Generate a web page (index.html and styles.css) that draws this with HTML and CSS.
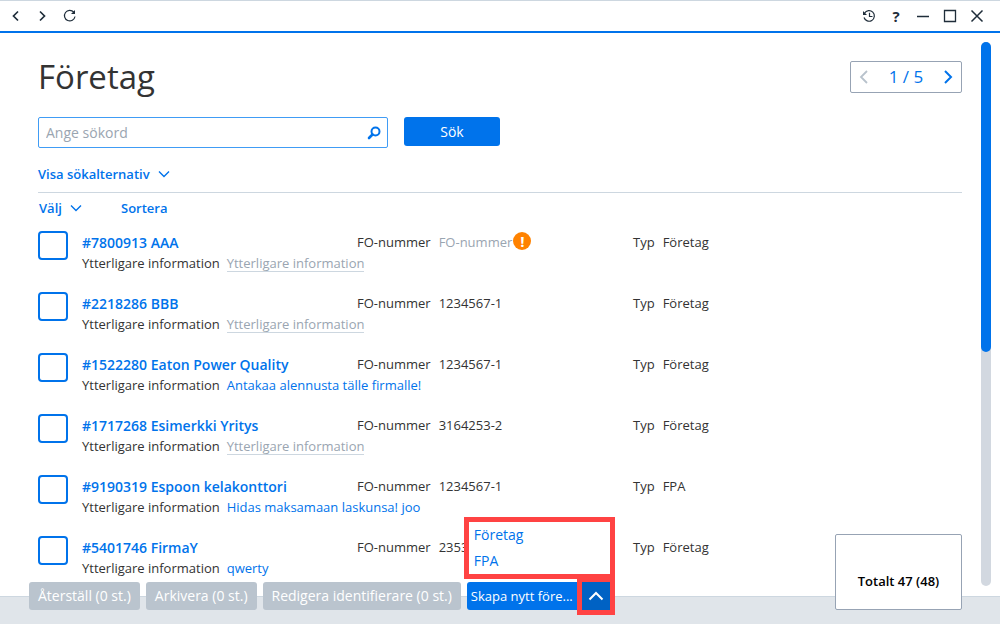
FILE: index.html
```html
<!DOCTYPE html>
<html lang="sv">
<head>
    <meta charset="UTF-8">
    <meta name="viewport" content="width=device-width, initial-scale=1.0">
    <title>Företag</title>
    <link rel="stylesheet" href="styles.css">
</head>
<body>

    <div class="window">
        <header class="titlebar">
            <div class="titlebar-group">
                <button class="icon-button" aria-label="Bakåt">
                    <svg width="14" height="14" viewBox="0 0 14 14"><path d="M9 2.5 4.5 7 9 11.500" stroke-width="1.700"/></svg>
                </button>
                <button class="icon-button" aria-label="Framåt">
                    <svg width="14" height="14" viewBox="0 0 14 14"><path d="M4 2.5 8.500 7 4 11.500" stroke-width="1.700"/></svg>
                </button>
                <button class="icon-button" aria-label="Uppdatera">
                    <svg width="14" height="14" viewBox="0 0 14 14"><path d="M10.800 3.200A5.300 5.300 0 1 0 12 7.500" stroke-width="1.200"/><path d="M12 1v4h-4z" fill="#1f2d3a" stroke="none"/></svg>
                </button>
            </div>
            <div class="titlebar-group">
                <button class="icon-button" aria-label="Historik">
                    <svg width="14" height="14" viewBox="0 0 14 14"><path d="M2.500 4.200A5.300 5.300 0 1 1 2 8.500M7.500 3.800V7.500H10.500" stroke-width="1.200"/><path d="M1 2v4h4z" fill="#1f2d3a" stroke="none"/></svg>
                </button>
                <button class="icon-button help" aria-label="Hjälp">?</button>
                <button class="icon-button" aria-label="Minimera">
                    <svg width="14" height="14" viewBox="0 0 14 14"><path d="M1 7.500h12" stroke-width="1.500"/></svg>
                </button>
                <button class="icon-button" aria-label="Maximera">
                    <svg width="14" height="14" viewBox="0 0 14 14"><path d="M1.500 1.500h11v11h-11z" stroke-width="1.300"/></svg>
                </button>
                <button class="icon-button" aria-label="Stäng">
                    <svg width="14" height="14" viewBox="0 0 14 14"><path d="M1.500 1.500l11 11M12.500 1.500l-11 11" stroke-width="1.500"/></svg>
                </button>
            </div>
        </header>

        <div class="content">
            <main class="page">
                <div class="page-head">
                    <h1>Företag</h1>
                    <div class="pager">
                        <button class="pager-button" aria-label="Föregående sida" disabled>
                            <svg width="12" height="16" viewBox="0 0 12 16"><path d="M9 2 3 8l6 6" stroke-width="1.800"/></svg>
                        </button>
                        <span>1 / 5</span>
                        <button class="pager-button" aria-label="Nästa sida">
                            <svg width="12" height="16" viewBox="0 0 12 16"><path d="M3 2l6 6-6 6" stroke-width="2"/></svg>
                        </button>
                    </div>
                </div>

                <form class="search">
                    <label class="search-field">
                        <input type="text" placeholder="Ange sökord" aria-label="Ange sökord">
                        <svg width="14" height="14" viewBox="0 0 14 14"><circle cx="8.500" cy="5.500" r="4" stroke-width="2"/><path d="M5.500 8.500 2 12" stroke-width="2.600" stroke-linecap="round"/></svg>
                    </label>
                    <button class="search-button" type="button">Sök</button>
                </form>

                <button class="text-button options">Visa sökalternativ
                    <svg width="12" height="8" viewBox="0 0 12 8"><path d="M1 1.500l5 5 5-5" stroke-width="1.400"/></svg>
                </button>

                <div class="list-tools">
                    <button class="text-button select-all">Välj
                        <svg width="12" height="8" viewBox="0 0 12 8"><path d="M1 1.500l5 5 5-5" stroke-width="1.400"/></svg>
                    </button>
                    <button class="text-button">Sortera</button>
                </div>

                <ul class="company-list">
                    <li class="company">
                        <input type="checkbox" id="c1" aria-label="Välj #7800913 AAA">
                        <a class="name" href="#">#7800913 AAA</a>
                        <p class="field"><span>FO-nummer</span><span class="missing">FO-nummer<i class="warning">!</i></span></p>
                        <p class="field"><span>Typ</span><span>Företag</span></p>
                        <p class="info"><span>Ytterligare information</span><a class="empty" href="#">Ytterligare information</a></p>
                    </li>
                    <li class="company">
                        <input type="checkbox" id="c2" aria-label="Välj #2218286 BBB">
                        <a class="name" href="#">#2218286 BBB</a>
                        <p class="field"><span>FO-nummer</span><span>1234567-1</span></p>
                        <p class="field"><span>Typ</span><span>Företag</span></p>
                        <p class="info"><span>Ytterligare information</span><a class="empty" href="#">Ytterligare information</a></p>
                    </li>
                    <li class="company">
                        <input type="checkbox" id="c3" aria-label="Välj #1522280 Eaton Power Quality">
                        <a class="name" href="#">#1522280 Eaton Power Quality</a>
                        <p class="field"><span>FO-nummer</span><span>1234567-1</span></p>
                        <p class="field"><span>Typ</span><span>Företag</span></p>
                        <p class="info"><span>Ytterligare information</span><a href="#">Antakaa alennusta tälle firmalle!</a></p>
                    </li>
                    <li class="company">
                        <input type="checkbox" id="c4" aria-label="Välj #1717268 Esimerkki Yritys">
                        <a class="name" href="#">#1717268 Esimerkki Yritys</a>
                        <p class="field"><span>FO-nummer</span><span>3164253-2</span></p>
                        <p class="field"><span>Typ</span><span>Företag</span></p>
                        <p class="info"><span>Ytterligare information</span><a class="empty" href="#">Ytterligare information</a></p>
                    </li>
                    <li class="company">
                        <input type="checkbox" id="c5" aria-label="Välj #9190319 Espoon kelakonttori">
                        <a class="name" href="#">#9190319 Espoon kelakonttori</a>
                        <p class="field"><span>FO-nummer</span><span>1234567-1</span></p>
                        <p class="field"><span>Typ</span><span>FPA</span></p>
                        <p class="info"><span>Ytterligare information</span><a href="#">Hidas maksamaan laskunsa! joo</a></p>
                    </li>
                    <li class="company">
                        <input type="checkbox" id="c6" aria-label="Välj #5401746 FirmaY">
                        <a class="name" href="#">#5401746 FirmaY</a>
                        <p class="field"><span>FO-nummer</span><span>2353</span></p>
                        <p class="field"><span>Typ</span><span>Företag</span></p>
                        <p class="info"><span>Ytterligare information</span><a href="#">qwerty</a></p>
                    </li>
                </ul>
            </main>

            <div class="scrollbar"><div class="thumb"></div></div>
        </div>

        <footer class="footer">
            <div class="actions">
                <button class="action" disabled>Återställ (0 st.)</button>
                <button class="action" disabled>Arkivera (0 st.)</button>
                <button class="action" disabled>Redigera identifierare (0 st.)</button>
                <div class="create">
                    <button class="action primary">Skapa nytt före...</button>
                    <button class="toggle" aria-label="Visa fler">
                        <svg width="16" height="10" viewBox="0 0 16 10"><path d="M1.500 8.500 8 2l6.500 6.500" stroke-width="2"/></svg>
                    </button>
                    <div class="menu">
                        <a href="#">Företag</a>
                        <a href="#">FPA</a>
                    </div>
                </div>
            </div>
            <div class="total">Totalt 47 (48)</div>
        </footer>
    </div>

</body>
</html>
```
FILE: styles.css
```css
* {
    box-sizing: border-box;
}

body {
    margin: 0;
    font-family: "Open Sans", "Noto Sans", sans-serif;
    font-size: 13px;
    line-height: 20px;
    color: #333;
    background-color: #fff;
}

h1, p, ul {
    margin: 0;
    padding: 0;
}

button, input {
    font: inherit;
}

button {
    padding: 0;
    border: none;
    background: none;
    cursor: pointer;
}

a {
    color: #0073eb;
    text-decoration: none;
}

svg {
    display: block;
    fill: none;
    stroke: currentColor;
}

.window {
    display: flex;
    flex-direction: column;
    height: 100vh;
    overflow: hidden;
}

/* title bar */
.titlebar {
    display: flex;
    flex: none;
    justify-content: space-between;
    height: 33px;
    padding: 0 16px 0 9px;
    border-top: 1px solid #cdd7e0;
    border-bottom: 2px solid #0073eb;
}

.titlebar-group {
    display: flex;
    align-items: center;
    gap: 13px;
}

.icon-button {
    width: 14px;
    color: #1f2d3a;
}

.help {
    font-size: 15px;
    font-weight: 700;
}

/* page */
.content {
    display: flex;
    flex: 1;
    min-height: 0;
}

.page {
    flex: 1;
    padding: 21px 19px 0 38px;
    overflow: hidden;
}

.page-head {
    display: flex;
    justify-content: space-between;
    align-items: center;
    height: 46px;
}

h1 {
    font-size: 33px;
    font-weight: 400;
    line-height: 46px;
}

.pager {
    display: flex;
    justify-content: space-between;
    align-items: center;
    width: 112px;
    height: 32px;
    padding: 0 7px;
    border: 1px solid #97a3b4;
    border-radius: 2px;
    font-size: 17px;
    color: #0073eb;
}

.pager-button {
    color: #0073eb;
}

.pager-button:disabled {
    color: #b8c2cc;
}

.search {
    display: flex;
    gap: 16px;
    margin-top: 17px;
}

.search-field {
    display: flex;
    align-items: center;
    width: 350px;
    height: 31px;
    padding: 0 6px 0 7px;
    border: 1px solid #409cf5;
    border-radius: 2px;
    color: #0073eb;
}

.search-field input {
    flex: 1;
    min-width: 0;
    padding: 0;
    border: none;
    outline: none;
    font-size: 14px;
}

.search-field input::placeholder {
    color: #9aa5b1;
}

.search-button {
    width: 96px;
    height: 29px;
    border-radius: 3px;
    background-color: #0073eb;
    color: #fff;
    font-size: 14px;
}

.text-button {
    display: flex;
    align-items: center;
    gap: 8px;
    color: #0073eb;
    font-size: 13px;
    font-weight: 600;
}

.options {
    margin-top: 16px;
}

.list-tools {
    display: flex;
    margin-top: 8px;
    padding: 5px 1px 0;
    border-top: 1px solid #cdd7e0;
}

.select-all {
    width: 82px;
}

/* companies */
.company-list {
    margin-top: 13px;
    list-style: none;
}

.company {
    display: grid;
    grid-template-columns: 44px 275px 276px 1fr;
    grid-template-rows: 22px 20px;
    height: 61px;
}

.company input {
    grid-row: span 2;
    width: 30px;
    height: 29px;
    margin: 0;
    border: 2px solid #0073eb;
    border-radius: 4px;
    appearance: none;
}

.company input:checked {
    background-color: #0073eb;
}

.name {
    padding-top: 2px;
    font-size: 14px;
    font-weight: 600;
}

.field {
    display: flex;
    gap: 8px;
    padding-top: 1px;
}

.info {
    display: flex;
    grid-column: 2 / -1;
    gap: 7px;
}

.missing {
    display: flex;
    gap: 1px;
    color: #9aa5b1;
}

.warning {
    width: 18px;
    height: 18px;
    border-radius: 50%;
    background-color: #ff8200;
    color: #fff;
    font-size: 15px;
    font-style: normal;
    font-weight: 700;
    line-height: 18px;
    text-align: center;
}

.empty {
    height: 19px;
    border-bottom: 1px solid #cdd7e0;
    color: #9aa5b1;
}

/* scrollbar */
.scrollbar {
    flex: none;
    width: 10px;
    margin: 9px 9px 10px 0;
    border-radius: 5px;
    background-color: #d2d8e0;
}

.thumb {
    height: 57%;
    border-radius: 5px;
    background-color: #0073eb;
}

/* footer with the buttons lying over its upper edge */
.footer {
    position: relative;
    display: flex;
    flex: none;
    justify-content: space-between;
    align-items: flex-end;
    height: 28px;
    padding: 0 38px 14px 29px;
    border-top: 1px solid #cdd7e0;
    background-color: #e0e5ea;
}

.actions {
    display: flex;
    gap: 6px;
}

.action {
    height: 28px;
    padding: 0 9px;
    border-radius: 3px;
    background-color: #bac4ce;
    color: #fff;
    font-size: 14px;
    white-space: nowrap;
}

.create {
    position: relative;
    display: flex;
}

.primary {
    width: 115px;
    padding: 0 4px;
    background-color: #0073eb;
    font-size: 13px;
    text-align: left;
}

.toggle {
    display: flex;
    justify-content: center;
    align-items: center;
    width: 28px;
    height: 28px;
    background-color: #0062c4;
    color: #fff;
    outline: 5px solid #ff4343;
}

.menu {
    position: absolute;
    right: -5px;
    bottom: 31px;
    width: 151px;
    padding: 0 5px;
    border: 5px solid #ff4343;
    background-color: #fff;
}

.menu a {
    display: block;
    font-size: 14px;
    line-height: 26px;
}

.total {
    display: flex;
    flex: none;
    justify-content: center;
    align-items: center;
    width: 127px;
    height: 76px;
    padding-top: 18px;
    border: 1px solid #97a3b4;
    border-radius: 2px;
    background-color: #fff;
    color: #000;
    font-weight: 600;
}
```
